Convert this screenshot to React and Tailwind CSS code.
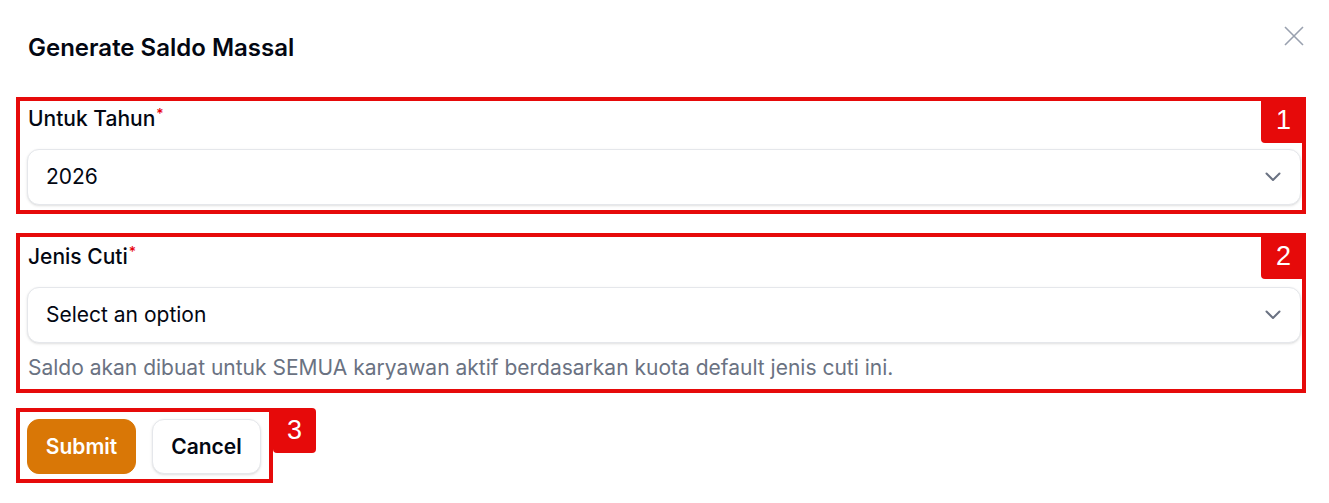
import { useState } from 'react'

function Chevron() {
  return (
    <svg width="16" height="10" viewBox="0 0 16 10" fill="none" className="text-gray-500">
      <path d="M1.5 1.5 L8 8 L14.5 1.5" stroke="currentColor" strokeWidth="2" strokeLinecap="round" strokeLinejoin="round" />
    </svg>
  )
}

function Field({ label, value, hint, className = '' }) {
  return (
    <div className={className}>
      <label className="block text-[21px] leading-[30px] font-medium text-gray-950">
        {label}
        <sup className="ml-px text-[14px] font-medium text-red-600">*</sup>
      </label>
      <div className="mt-[15px] -ml-px h-[56px] flex items-center justify-between rounded-[12px] border border-gray-200 bg-white pl-[18px] pr-[19px] shadow-sm">
        <span className="text-[21px] text-gray-950">{value}</span>
        <Chevron />
      </div>
      {hint && <p className="mt-[10px] text-[21px] leading-[30px] text-gray-500">{hint}</p>}
    </div>
  )
}

function Badge({ n, className = '' }) {
  return (
    <div className={`absolute flex items-center justify-center bg-[#e60a0a] text-white text-[27px] leading-none font-['Liberation_Sans',Arial,sans-serif] ${className}`}>
      {n}
    </div>
  )
}

export default function App() {
  const [year] = useState('2026')

  return (
    <div className="relative h-[503px] w-full overflow-hidden bg-white font-['Inter',sans-serif]">
      <div className="px-[28px] pt-[30px]">
        <div className="flex items-start justify-between">
          <h2 className="text-[24px] leading-[35px] font-semibold text-gray-950">Generate Saldo Massal</h2>
          <svg width="20" height="20" viewBox="0 0 20 20" className="-mt-[4px] -mr-[3px] text-gray-400">
            <path d="M1 1 L19 19 M19 1 L1 19" stroke="currentColor" strokeWidth="1.6" />
          </svg>
        </div>

        <Field label="Untuk Tahun" value={year} className="mt-[39px]" />
        <Field
          label="Jenis Cuti"
          value="Select an option"
          hint="Saldo akan dibuat untuk SEMUA karyawan aktif berdasarkan kuota default jenis cuti ini."
          className="mt-[37px]"
        />

        <div className="mt-[36px] -ml-px flex gap-[16px]">
          <button className="h-[55px] w-[109px] rounded-[12px] border border-[#d97706] bg-[#d97706] text-[21px] font-semibold text-white">
            Submit
          </button>
          <button className="h-[55px] w-[109px] rounded-[12px] border border-gray-200 bg-white text-[21px] font-semibold text-gray-950 shadow-sm">
            Cancel
          </button>
        </div>
      </div>

      {/* annotation overlays */}
      <div className="absolute left-[16px] top-[97px] h-[117px] w-[1290px] border-[4px] border-[#e60a0a]">
        <Badge n="1" className="-right-[4px] -top-[4px] h-[46px] w-[45px] rounded-bl-[4px]" />
      </div>
      <div className="absolute left-[16px] top-[233px] h-[160px] w-[1290px] border-[4px] border-[#e60a0a]">
        <Badge n="2" className="-right-[4px] -top-[4px] h-[46px] w-[45px] rounded-bl-[4px]" />
      </div>
      <div className="absolute left-[16px] top-[408px] h-[75px] w-[257px] border-[4px] border-[#e60a0a]">
        <Badge n="3" className="-right-[47px] -top-[4px] h-[45px] w-[43px] rounded-r-[4px] rounded-bl-[4px]" />
      </div>
    </div>
  )
}
